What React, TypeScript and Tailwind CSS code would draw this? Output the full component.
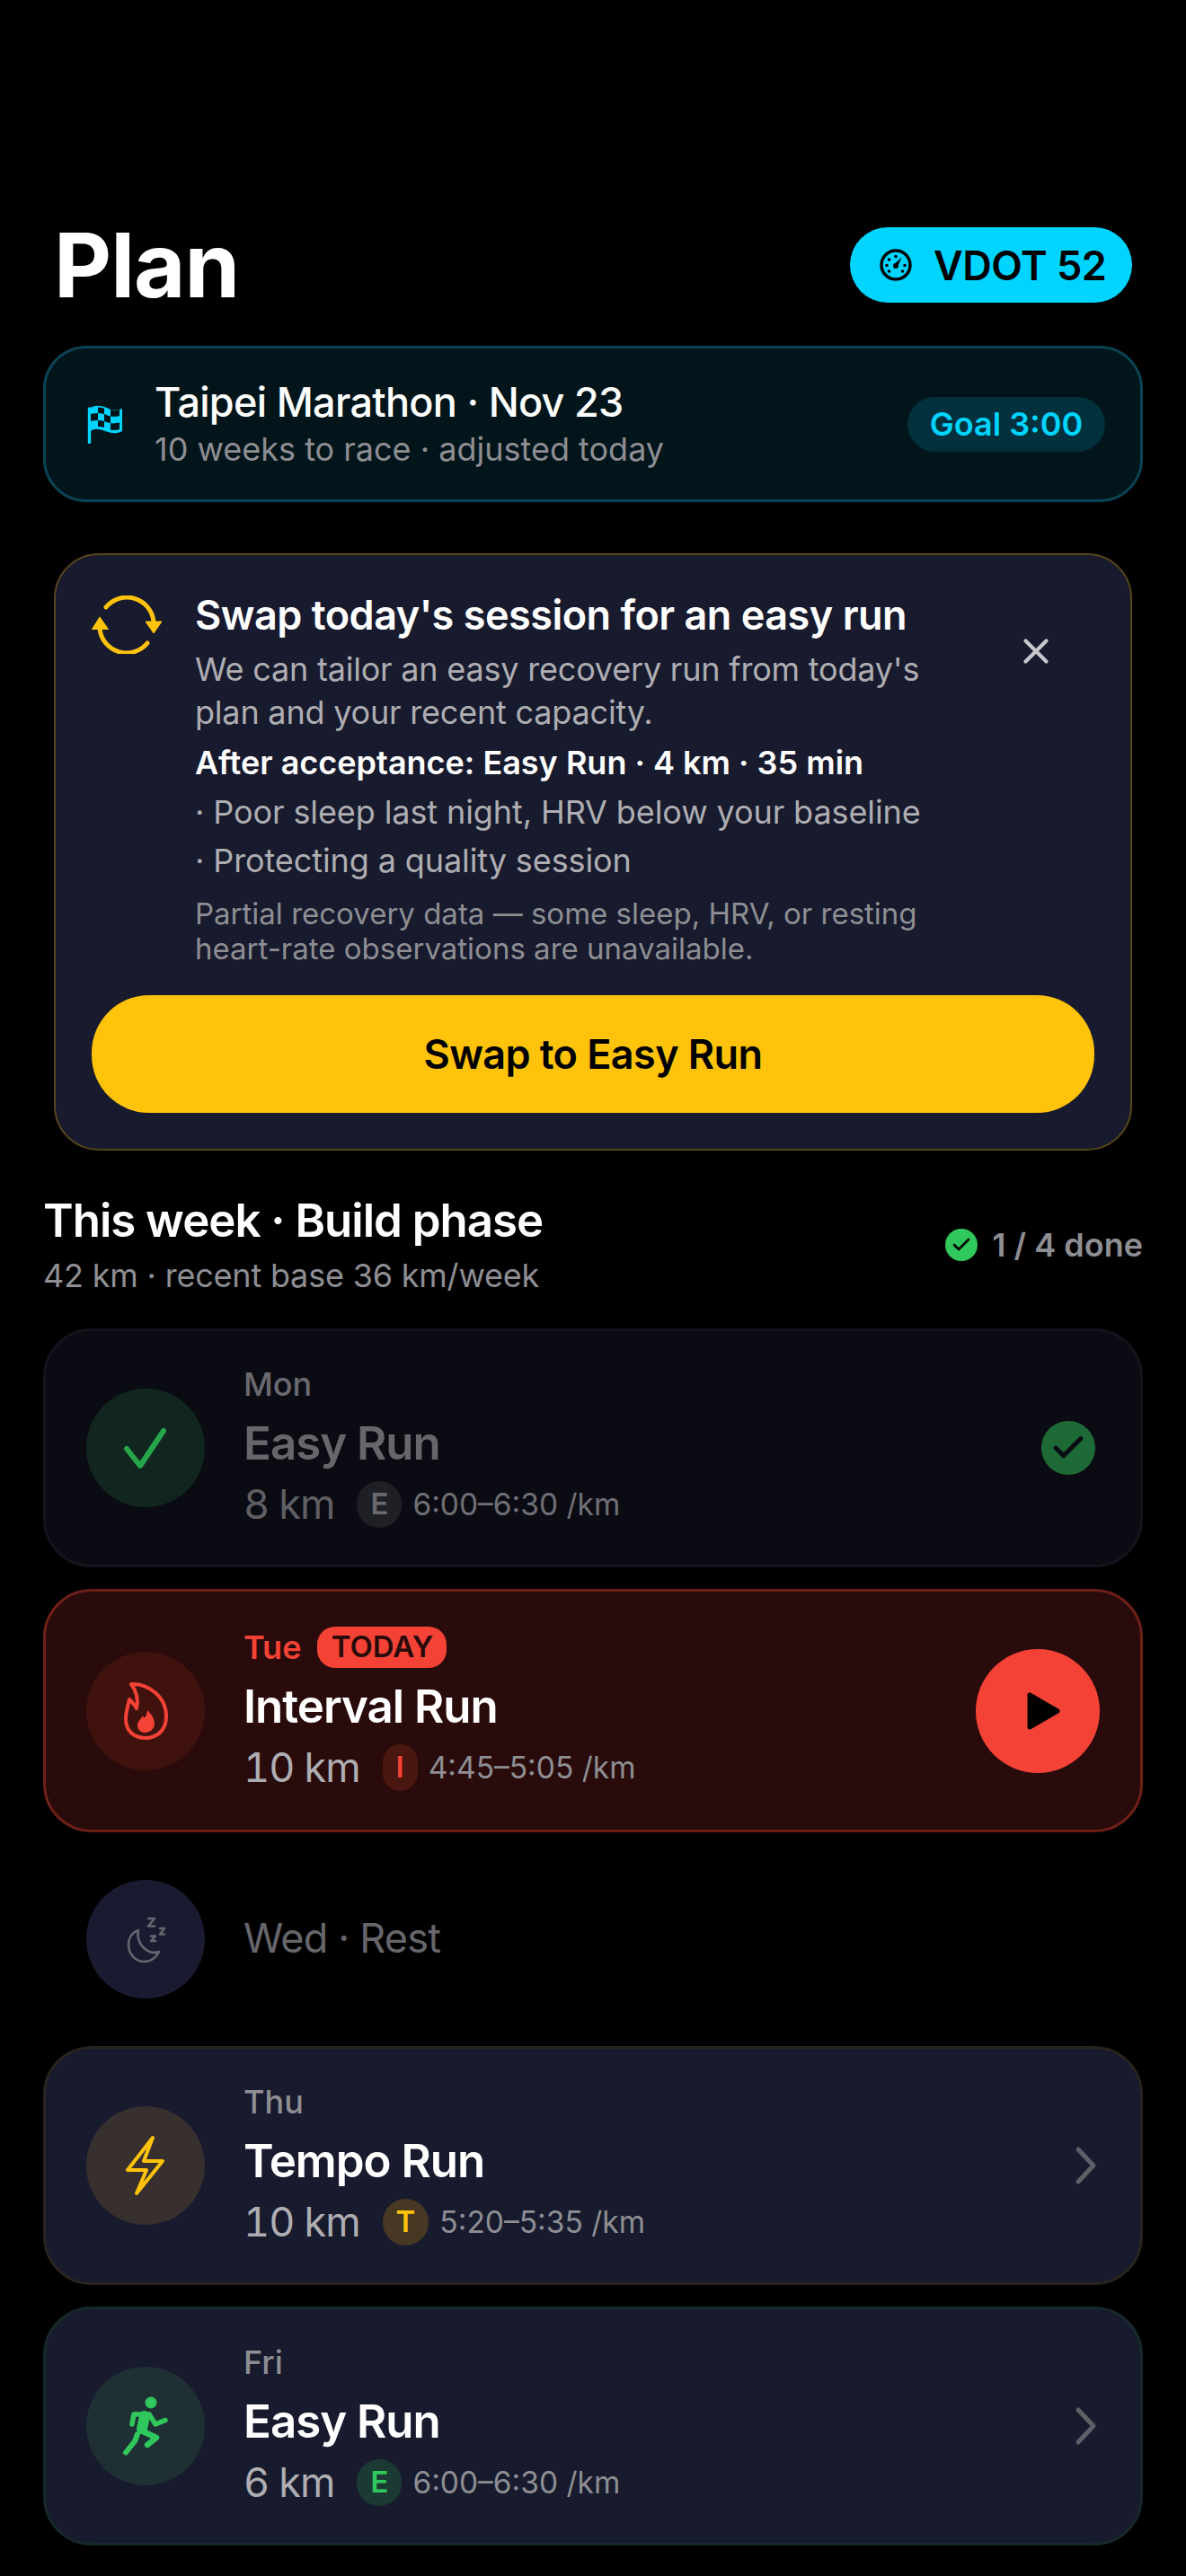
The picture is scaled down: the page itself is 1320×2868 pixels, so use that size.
import type { ReactNode } from "react";
import { X, Check } from "lucide-react";

function GaugeIcon() {
  return (
    <svg viewBox="0 0 36 36" className="w-[36px] h-[36px]">
      <circle cx="18" cy="18" r="16" fill="none" stroke="#000" strokeWidth="3.4" />
      <circle cx="18" cy="8.5" r="1.8" fill="#000" />
      <circle cx="10.5" cy="12" r="1.8" fill="#000" />
      <circle cx="8" cy="18.5" r="1.8" fill="#000" />
      <circle cx="10.5" cy="25" r="1.8" fill="#000" />
      <circle cx="28" cy="18.5" r="1.8" fill="#000" />
      <circle cx="25.5" cy="25" r="1.8" fill="#000" />
      <path d="M16 17.5 L24.5 9.5 L20 20 Z" fill="#000" />
      <circle cx="18" cy="19" r="3" fill="#000" />
    </svg>
  );
}

function FlagIcon() {
  return (
    <svg viewBox="0 0 40 44" className="w-[40px] h-[44px] shrink-0">
      <path d="M2.5 42.5 V5" stroke="#00d4ff" strokeWidth="3.4" strokeLinecap="round" fill="none" />
      <path d="M1 6 C8 -1 18 2 24 5 C29 7 34 7 39 5 V30 C32 34 26 32 20 30 C13 27 7 27 4 30 Z" fill="#00d4ff" />
      <path
        d="M4 11 C7 10 10 10 12 10 V18 C9 18 7 18 4 19 Z M19 11 C22 12 24 13 26 13.5 V21 C24 21 22 20 19 19 Z M12 18 C14 18 17 18 19 19 V26 C17 25 14 25 12 25 Z M26 21 C29 22 32 21 36 20.5 V28 C32 29 29 29 26 28.5 Z M26 5.5 C29 7 32 7 36 6 V13 C32 14 29 14 26 13.5 Z M12 3.5 C14 3.5 17 4 19 4.5 V11 C17 10.5 14 10 12 10 Z"
        fill="#02151b"
      />
    </svg>
  );
}

function SwapIcon() {
  return (
    <svg viewBox="22 23 78 65" className="w-[78px] h-[65px] shrink-0 mt-[8px]">
      <path d="M38 36 A30 30 0 0 1 91 52" fill="none" stroke="#ffc30b" strokeWidth="5" strokeLinecap="round" />
      <path d="M82 52 H100 L91 65 Z" fill="#ffc30b" stroke="#ffc30b" strokeWidth="1" strokeLinejoin="round" />
      <path d="M84 76 A30 30 0 0 1 31 60" fill="none" stroke="#ffc30b" strokeWidth="5" strokeLinecap="round" />
      <path d="M22.5 60.5 H40.5 L31 47 Z" fill="#ffc30b" stroke="#ffc30b" strokeWidth="1" strokeLinejoin="round" />
    </svg>
  );
}

function FlameIcon() {
  return (
    <svg viewBox="16 18 132 132" className="w-[132px] h-[132px]">
      <path
        d="M66 54 C84 53 105 67 105 90 C105 106 94 114 82 114 C68 114 60 105 60 93 C60 84 63 77 64 71 C67 74 70 77 72 81 C74 72 72 62 66 54 Z"
        fill="none"
        stroke="#f44336"
        strokeWidth="4"
        strokeLinejoin="round"
      />
      <path
        d="M79 89 C80 93 83 92 84 83 C88 87 92 92 92 98 C92 104 87 108 81 108 C76 108 73 104 73 100 C73 95 77 93 79 89 Z"
        fill="#f44336"
      />
    </svg>
  );
}

function MoonIcon() {
  return (
    <svg viewBox="16 12 132 132" className="w-[132px] h-[132px]">
      <g fill="none" stroke="#66666e" strokeLinecap="round" strokeLinejoin="round">
        <path
          d="M74 68 C66 71 63 78 63 84 C63 95 71 103 81 103 C88 103 94 98 97 92 C85 96 71 84 74 68 Z"
          strokeWidth="2.6"
        />
        <path d="M85 55 H92 L85 63.5 H92" strokeWidth="2.6" />
        <path d="M98 66 H103 L98 72.5 H103" strokeWidth="2.4" />
        <path d="M88 74.5 H93 L88 80 H93" strokeWidth="2.4" />
      </g>
    </svg>
  );
}

function BoltIcon() {
  return (
    <svg viewBox="16 15 132 132" className="w-[132px] h-[132px]">
      <path
        d="M90 50 L62 86 H83 L72 112 L101 76 H80 Z"
        fill="none"
        stroke="#ffc30b"
        strokeWidth="4"
        strokeLinejoin="round"
      />
    </svg>
  );
}

function RunnerIcon() {
  return (
    <svg viewBox="16 5 132 132" className="w-[132px] h-[132px]">
      <g fill="none" stroke="#30c85c" strokeLinecap="round" strokeLinejoin="round">
        <circle cx="88" cy="45" r="6.5" fill="#30c85c" stroke="none" />
        <path d="M81 60 L78 74" strokeWidth="12" />
        <path d="M86 58 L93 69 L104 64.5" strokeWidth="5.5" />
        <path d="M80 58 H69 L67 69" strokeWidth="5.5" />
        <path d="M79 77 L94 84 L84 92" strokeWidth="6.5" />
        <path d="M73 80 L70 88 L60 100.5" strokeWidth="6" />
      </g>
    </svg>
  );
}

function IconCircle({ className, children }: { className: string; children: ReactNode }) {
  return (
    <div className={`w-[132px] h-[132px] rounded-full shrink-0 flex items-center justify-center ${className}`}>
      {children}
    </div>
  );
}

function PaceLine({
  km,
  zone,
  pace,
  kmClass,
  badgeClass,
  paceClass,
}: {
  km: string;
  zone: string;
  pace: string;
  kmClass: string;
  badgeClass: string;
  paceClass: string;
}) {
  return (
    <div className="flex items-center h-[52px] mt-[12px]">
      <span className={`text-[45px] leading-[52px] tabular-nums tracking-[-1px] ${kmClass}`}>{km}</span>
      <span
        className={`ml-[25px] h-[52px] px-[15px] rounded-full flex items-center text-[33px] font-semibold ${badgeClass}`}
      >
        {zone}
      </span>
      <span className={`ml-[12px] text-[33.5px] leading-[52px] ${paceClass}`}>{pace}</span>
    </div>
  );
}

function Chevron() {
  return (
    <svg viewBox="0 0 26 44" className="w-[26px] h-[44px] mr-[2px] shrink-0">
      <path d="M4 4 L21 22 L4 40" fill="none" stroke="#5f5f68" strokeWidth="5" strokeLinecap="round" strokeLinejoin="round" />
    </svg>
  );
}

export default function App() {
  return (
    <div className="h-[2868px] overflow-hidden bg-black pt-[253px] px-[48px] font-['Inter',sans-serif] text-white">
      {/* header */}
      <div className="flex items-center justify-between h-[84px] px-[12px]">
        <h1 className="text-[99px] leading-[84px] font-bold tracking-[-1px]">Plan</h1>
        <div className="flex items-center h-[84px] w-[314px] pl-[33px] bg-[#00d4ff] rounded-full text-black">
          <GaugeIcon />
          <span className="ml-[24px] text-[45px] font-semibold leading-none tracking-[-0.5px]">VDOT 52</span>
        </div>
      </div>

      {/* race */}
      <div className="mt-[48px] h-[174px] flex items-center pl-[46px] pr-[39px] rounded-[48px] border-[3px] border-[#0a4454] bg-[#02151b]">
        <FlagIcon />
        <div className="ml-[35px] flex-1">
          <div className="text-[45px] leading-[54px] font-medium tracking-[-0.7px]">Taipei Marathon · Nov 23</div>
          <div className="text-[36px] leading-[46px] text-[#8e8e93] mt-[2px]">10 weeks to race · adjusted today</div>
        </div>
        <div className="h-[61px] w-[220px] flex items-center justify-center rounded-full bg-[#02303c] text-[#00d4ff] text-[36px] font-semibold">
          Goal 3:00
        </div>
      </div>

      {/* swap suggestion */}
      <div className="mt-[57px] mx-[12px] pt-[37px] pb-[40px] px-[40px] rounded-[50px] border-[2px] border-[#57451a] bg-[#181a2e]">
        <div className="flex items-start">
          <SwapIcon />
          <div className="ml-[37px] w-[820px]">
            <div className="text-[45px] leading-[60px] font-semibold tracking-[-0.5px]">
              Swap today's session for an easy run
            </div>
            <div className="mt-[6px] text-[36px] leading-[48px] text-[#aeaeb2] tracking-[-0.2px]">
              We can tailor an easy recovery run from today's plan and your recent capacity.
            </div>
            <div className="mt-[8px] text-[36px] leading-[48px] font-semibold">
              After acceptance: Easy Run · 4 km · 35 min
            </div>
            <div className="mt-[7px] text-[36px] leading-[48px] text-[#aeaeb2] tracking-[-0.1px]">
              · Poor sleep last night, HRV below your baseline
            </div>
            <div className="mt-[6px] text-[36px] leading-[48px] text-[#aeaeb2] tracking-[-0.1px]">
              · Protecting a quality session
            </div>
            <div className="mt-[16px] text-[33px] leading-[39px] text-[#8e8e93]">
              Partial recovery data — some sleep, HRV, or resting heart-rate observations are unavailable.
            </div>
          </div>
          <X className="ml-[93px] mt-[47px] w-[46px] h-[46px] text-[#c7c7cc] shrink-0" strokeWidth={2.2} />
        </div>
        <div className="mt-[32px] h-[131px] rounded-[64px] bg-[#ffc30b] flex items-center justify-center text-black text-[45px] font-semibold tracking-[-0.6px]">
          Swap to Easy Run
        </div>
      </div>

      {/* week heading */}
      <div className="mt-[48px] flex items-center justify-between">
        <div>
          <div className="text-[51px] leading-[60px] font-semibold tracking-[-1px]">This week · Build phase</div>
          <div className="mt-[7px] text-[36px] leading-[48px] text-[#8e8e93] tracking-[-0.2px]">
            42 km · recent base 36 km/week
          </div>
        </div>
        <div className="flex items-center mb-[2px]">
          <div className="w-[36px] h-[36px] rounded-full bg-[#30c85c] flex items-center justify-center">
            <Check className="w-[24px] h-[24px] text-black" strokeWidth={2.6} />
          </div>
          <span className="ml-[16px] text-[36px] font-semibold text-[#8e8e93]">1 / 4 done</span>
        </div>
      </div>

      {/* sessions */}
      <div className="mt-[35px] flex flex-col gap-[24px]">
        <div className="flex items-center h-[266px] pl-[45px] pr-[50px] rounded-[54px] border-[3px] border-[#13141c] bg-[#0b0c13]">
          <IconCircle className="bg-[#10261f]">
            <svg viewBox="0 0 60 60" className="w-[60px] h-[60px]">
              <path
                d="M9 31 L24 50 L50 11"
                fill="none"
                stroke="#26a54b"
                strokeWidth="6"
                strokeLinecap="round"
                strokeLinejoin="round"
              />
            </svg>
          </IconCircle>
          <div className="ml-[43px] flex-1 pb-[4px]">
            <div className="text-[36px] leading-[45px] font-medium text-[#6a6a70]">Mon</div>
            <div className="mt-[13px] text-[51px] leading-[60px] font-semibold text-[#66666b] tracking-[-1px]">
              Easy Run
            </div>
            <PaceLine
              km="8 km"
              zone="E"
              pace="6:00–6:30 /km"
              kmClass="text-[#5f5f64]"
              badgeClass="bg-[#1f2026] text-[#6a6a70]"
              paceClass="text-[#707075]"
            />
          </div>
          <div className="w-[60px] h-[60px] rounded-full bg-[#1d6a36] flex items-center justify-center">
            <Check className="w-[42px] h-[42px] text-[#0b0c13]" strokeWidth={2.8} />
          </div>
        </div>

        <div className="flex items-center h-[271px] pl-[45px] pr-[45px] rounded-[54px] border-[3px] border-[#6e2018] bg-[#290b0b]">
          <IconCircle className="bg-[#40120e]">
            <FlameIcon />
          </IconCircle>
          <div className="ml-[43px] flex-1 pb-[4px]">
            <div className="flex items-center h-[46px]">
              <span className="text-[36px] font-semibold text-[#f44336]">Tue</span>
              <span className="ml-[18px] h-[46px] w-[144px] rounded-[20px] bg-[#f44336] flex items-center justify-center text-[33px] font-semibold text-[#290b0b]">
                TODAY
              </span>
            </div>
            <div className="mt-[13px] text-[51px] leading-[60px] font-semibold tracking-[-1px]">Interval Run</div>
            <PaceLine
              km="10 km"
              zone="I"
              pace="4:45–5:05 /km"
              kmClass="text-[#aeaeb2]"
              badgeClass="bg-[#4a1610] text-[#f44336]"
              paceClass="text-[#8e8e93]"
            />
          </div>
          <div className="w-[138px] h-[138px] rounded-full bg-[#f44336] flex items-center justify-center">
            <svg viewBox="0 0 37 42" className="w-[37px] h-[42px] ml-[12px]">
              <path d="M3 3 L34 21 L3 39 Z" fill="#000" stroke="#000" strokeWidth="5" strokeLinejoin="round" />
            </svg>
          </div>
        </div>

        <div className="flex items-center h-[190px] pl-[48px]">
          <IconCircle className="bg-[#1a1b30]">
            <MoonIcon />
          </IconCircle>
          <div className="ml-[43px] pb-[2px] text-[45px] text-[#66666b] tracking-[-0.8px]">Wed · Rest</div>
        </div>

        <div className="flex items-center h-[266px] pl-[45px] pr-[45px] rounded-[54px] border-[3px] border-[#29241e] bg-[#181a2e]">
          <IconCircle className="bg-[#38302e]">
            <BoltIcon />
          </IconCircle>
          <div className="ml-[43px] flex-1 pb-[4px]">
            <div className="text-[36px] leading-[45px] font-medium text-[#8e8e93]">Thu</div>
            <div className="mt-[13px] text-[51px] leading-[60px] font-semibold tracking-[-1px]">Tempo Run</div>
            <PaceLine
              km="10 km"
              zone="T"
              pace="5:20–5:35 /km"
              kmClass="text-[#aeaeb2]"
              badgeClass="bg-[#463822] text-[#ffc30b]"
              paceClass="text-[#8e8e93]"
            />
          </div>
          <Chevron />
        </div>

        <div className="flex items-center h-[266px] pl-[45px] pr-[45px] rounded-[54px] border-[3px] border-[#17282a] bg-[#181a2e]">
          <IconCircle className="bg-[#1e3034]">
            <RunnerIcon />
          </IconCircle>
          <div className="ml-[43px] flex-1 pb-[4px]">
            <div className="text-[36px] leading-[45px] font-medium text-[#8e8e93]">Fri</div>
            <div className="mt-[13px] text-[51px] leading-[60px] font-semibold tracking-[-1px]">Easy Run</div>
            <PaceLine
              km="6 km"
              zone="E"
              pace="6:00–6:30 /km"
              kmClass="text-[#aeaeb2]"
              badgeClass="bg-[#1c3a34] text-[#30c85c]"
              paceClass="text-[#8e8e93]"
            />
          </div>
          <Chevron />
        </div>
      </div>
    </div>
  );
}
